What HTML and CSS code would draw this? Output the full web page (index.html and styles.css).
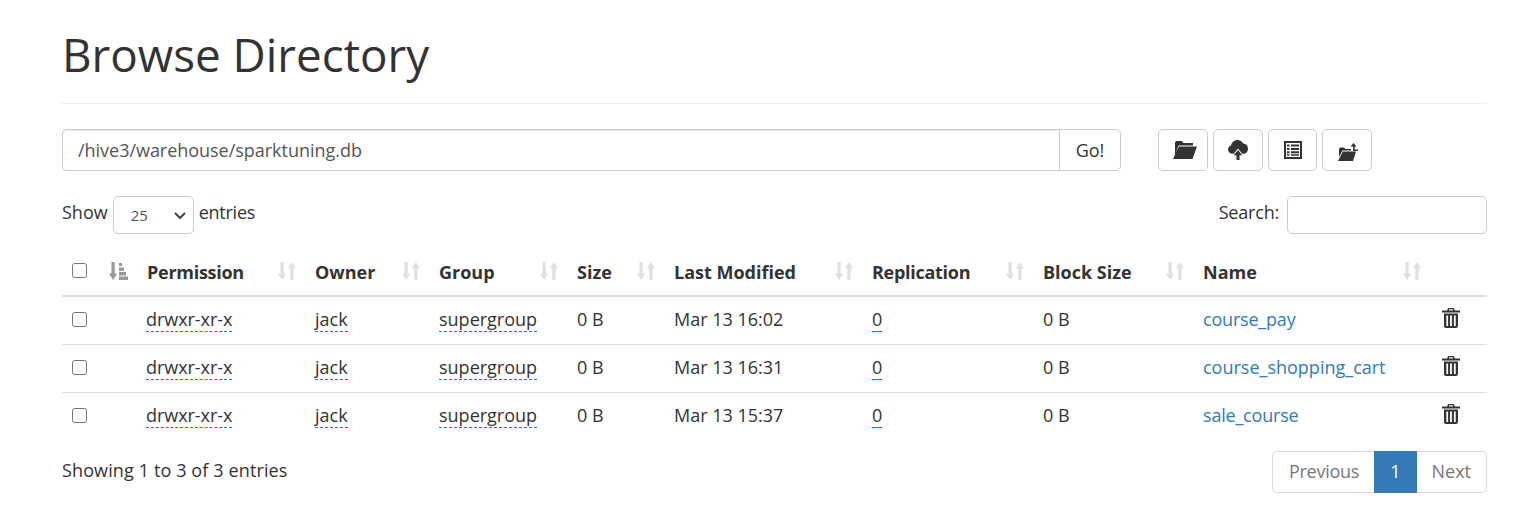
FILE: index.html
```html
<!DOCTYPE html>
<html lang="en">
<head>
<meta charset="utf-8">
<title>Browse Directory</title>
<link rel="stylesheet" href="styles.css">
</head>
<body>
<svg class="defs" width="0" height="0" aria-hidden="true">
  <symbol id="sort" viewBox="0 0 18 18">
    <path d="M2.500 0h3.200v11.500H8.200L4.100 18 0 11.500h2.500z"/>
    <path d="M12.300 18V6.500H9.800L13.900 0 18 6.500h-2.500V18z"/>
  </symbol>
  <symbol id="sortactive" viewBox="0 0 19 18">
    <path d="M2.500 0h3.200v11.500H8.200L4.100 18 0 11.500h2.500z"/>
    <path d="M10 1h3v3h-3zM10 5.500h5V9h-5zM10 10h7v3.500h-7zM10 14.500h9V18h-9z"/>
  </symbol>
  <symbol id="trash" viewBox="0 0 18 20">
    <path d="M0 2.500h5.500V1.500C5.500 .7 6.200 0 7 0h4c.8 0 1.500.7 1.500 1.500v1H18V4.500H0zM7 2.500h4V1.300H7z"/>
    <path fill-rule="evenodd" d="M2 5.500h14V18c0 1-1 2-2 2H4c-1 0-2-1-2-2zM4.300 7.500v10.500h1.800V7.500zM8.100 7.500v10.500h1.800V7.500zM11.900 7.500v10.500h1.800V7.500z"/>
  </symbol>
</svg>
<main class="page">
  <h1 class="title">Browse Directory</h1>
  <div class="toolbar">
    <div class="pathgroup">
      <input class="pathinput" type="text" value="/hive3/warehouse/sparktuning.db">
      <button class="gobtn" type="button">Go!</button>
    </div>
    <div class="tools">
      <button class="toolbtn" type="button">
        <svg class="ic-folder" width="24" height="18" viewBox="0 0 24 18"><path d="M2 14V1.500L3 0h6l1.500 2H20v2.500H5.500zM5.800 5.500H24L19.500 18H0z"/></svg>
      </button>
      <button class="toolbtn" type="button">
        <svg width="20" height="20" viewBox="0 0 21 21"><path d="M5 14.500C2.200 14.500 0 12.500 0 10c0-2 1.300-3.500 3.200-4.100C3.700 2.500 6.500 0 10 0c2.700 0 5 1.500 6 3.800 2.800.2 5 2.500 5 5.300 0 3-2.300 5.400-5.200 5.400H15L10.500 9 6 14.500z"/><path d="M10.500 10.500L15 16h-2.900v5H8.900v-5H6z"/></svg>
      </button>
      <button class="toolbtn narrow" type="button">
        <svg width="18" height="18" viewBox="0 0 18 18"><path fill-rule="evenodd" d="M0 0h18v18H0zM2 2v14h14V2zM3 3.500h2.500v2H3zM7 3.500h8v2H7zM3 7h2.500v2H3zM7 7h8v2H7zM3 10.200h2.500v2H3zM7 10.200h8v2H7zM3 13.300h2.500v1.500H3zM7 13.300h8v1.500H7z"/></svg>
      </button>
      <button class="toolbtn" type="button">
        <svg class="ic-up" width="20" height="18" viewBox="0 0 20 18"><path d="M1 14V6l1-1.500h4L7.500 6H13v1.500H4.500zM4.800 8.500H18L15 18H0z"/><path d="M15.500 0l3 3.500h-1.800v3H20v1.500h-5V3.500h-2.500z"/></svg>
      </button>
    </div>
  </div>
  <div class="controls">
    <label class="lengthlabel"><span class="ctext">Show</span><select class="lengthselect"><option>25</option></select><span class="ctext entries">entries</span></label>
    <label class="searchlabel"><span class="ctext searchtext">Search:</span><input class="searchinput" type="text"></label>
  </div>
  <table class="files">
    <thead>
      <tr>
        <th class="c-check"><input class="check" type="checkbox"></th>
        <th class="c-sort"><svg class="sorticon active" width="19" height="18"><use href="#sortactive"/></svg></th>
        <th class="c-perm"><span class="th tight">Permission<svg class="sorticon" width="18" height="18"><use href="#sort"/></svg></span></th>
        <th class="c-owner"><span class="th">Owner<svg class="sorticon" width="18" height="18"><use href="#sort"/></svg></span></th>
        <th class="c-group"><span class="th">Group<svg class="sorticon" width="18" height="18"><use href="#sort"/></svg></span></th>
        <th class="c-size"><span class="th">Size<svg class="sorticon" width="18" height="18"><use href="#sort"/></svg></span></th>
        <th class="c-mod"><span class="th">Last Modified<svg class="sorticon" width="18" height="18"><use href="#sort"/></svg></span></th>
        <th class="c-rep"><span class="th tight">Replication<svg class="sorticon" width="18" height="18"><use href="#sort"/></svg></span></th>
        <th class="c-block"><span class="th">Block Size<svg class="sorticon" width="18" height="18"><use href="#sort"/></svg></span></th>
        <th class="c-name"><span class="th">Name<svg class="sorticon" width="18" height="18"><use href="#sort"/></svg></span></th>
        <th class="c-del"></th>
      </tr>
    </thead>
    <tbody>
      <tr>
        <td><input class="check" type="checkbox"></td><td></td>
        <td><span class="editable perm">drwxr-xr-x</span></td>
        <td><span class="editable">jack</span></td>
        <td><span class="editable">supergroup</span></td>
        <td>0 B</td>
        <td>Mar 13 16:02</td>
        <td><span class="editable red">0</span></td>
        <td>0 B</td>
        <td><a class="link short" href="#">course_pay</a></td>
        <td class="del"><svg width="18" height="20"><use href="#trash"/></svg></td>
      </tr>
      <tr>
        <td><input class="check" type="checkbox"></td><td></td>
        <td><span class="editable perm">drwxr-xr-x</span></td>
        <td><span class="editable">jack</span></td>
        <td><span class="editable">supergroup</span></td>
        <td>0 B</td>
        <td>Mar 13 16:31</td>
        <td><span class="editable red">0</span></td>
        <td>0 B</td>
        <td><a class="link" href="#">course_shopping_cart</a></td>
        <td class="del"><svg width="18" height="20"><use href="#trash"/></svg></td>
      </tr>
      <tr>
        <td><input class="check" type="checkbox"></td><td></td>
        <td><span class="editable perm">drwxr-xr-x</span></td>
        <td><span class="editable">jack</span></td>
        <td><span class="editable">supergroup</span></td>
        <td>0 B</td>
        <td>Mar 13 15:37</td>
        <td><span class="editable red">0</span></td>
        <td>0 B</td>
        <td><a class="link short" href="#">sale_course</a></td>
        <td class="del"><svg width="18" height="20"><use href="#trash"/></svg></td>
      </tr>
    </tbody>
  </table>
  <div class="footer">
    <div class="info">Showing 1 to 3 of 3 entries</div>
    <nav class="pager">
      <a class="pg first" href="#">Previous</a><a class="pg current" href="#">1</a><a class="pg last" href="#">Next</a>
    </nav>
  </div>
</main>
</body>
</html>
```
FILE: styles.css
```css
* { box-sizing: border-box; }
html, body { margin: 0; background: #fff; }
body {
  font-family: "Open Sans", "Noto Sans", sans-serif;
  font-size: 18px;
  color: #333;
  height: 520px;
  overflow: hidden;
}
.defs { position: absolute; }
.page { padding: 0 40px 0 62px; }
.title {
  margin: 0;
  height: 104px;
  padding-top: 25px;
  font-size: 45.75px;
  line-height: 58px;
  font-weight: 400;
  border-bottom: 1px solid #eee;
}
.toolbar { display: flex; margin-top: 25px; height: 42px; }
.pathgroup { display: flex; width: 1059px; flex: none; }
.pathinput {
  flex: 1;
  min-width: 0;
  height: 42px;
  padding: 0 15px;
  font: inherit;
  letter-spacing: -.03px;
  color: #555;
  border: 1px solid #ccc;
  border-right: 0;
  border-radius: 5px 0 0 5px;
  box-shadow: inset 0 1px 1px rgba(0,0,0,.075);
}
.gobtn {
  width: 62px;
  flex: none;
  height: 42px;
  font: inherit;
  color: #333;
  background: #fff;
  border: 1px solid #ccc;
  border-radius: 0 5px 5px 0;
}
.tools { display: flex; gap: 5px; margin-left: 37px; }
.toolbtn {
  width: 50px;
  height: 42px;
  padding: 0;
  display: flex;
  align-items: center;
  justify-content: center;
  background: #fff;
  border: 1px solid #ccc;
  border-radius: 5px;
}
.toolbtn.narrow { width: 49px; }
.toolbtn svg { fill: #333; }
.ic-folder { margin-left: 3px; }
.ic-up { margin-top: 4px; margin-left: 1px; }
.controls {
  display: flex;
  justify-content: space-between;
  align-items: center;
  margin-top: 25px;
  height: 38px;
}
.lengthlabel, .searchlabel { display: flex; align-items: center; }
.ctext { padding-bottom: 7px; }
.lengthselect {
  appearance: none;
  width: 81px;
  height: 38px;
  margin: 0 5px 0 5px;
  padding: 0 17px;
  font: 15px "Open Sans", sans-serif;
  color: #555;
  background: #fff url("data:image/svg+xml,%3Csvg xmlns='http://www.w3.org/2000/svg' width='12' height='7' viewBox='0 0 12 7'%3E%3Cpath d='M1 1l5 5 5-5' fill='none' stroke='%23444' stroke-width='2'/%3E%3C/svg%3E") no-repeat right 7px center;
  border: 1px solid #ccc;
  border-radius: 5px;
}
.entries { letter-spacing: -.25px; }
.searchtext { letter-spacing: -.2px; }
.searchinput {
  width: 200px;
  height: 38px;
  margin-left: 8px;
  border: 1px solid #ccc;
  border-radius: 5px;
}
.files {
  width: 1425px;
  margin-top: 14px;
  table-layout: fixed;
  border-collapse: collapse;
}
.files th, .files td {
  padding: 0 10px;
  text-align: left;
  vertical-align: middle;
  overflow: visible;
  white-space: nowrap;
}
.files th { height: 48px; font-weight: 700; border-bottom: 2px solid #ddd; }
.files td { height: 48px; padding-bottom: 2px; border-bottom: 1px solid #ddd; }
.files tbody tr:last-child td { border-bottom: 0; }
.c-check { width: 37px; }
.c-sort { width: 38px; }
.c-perm { width: 168px; }
.c-owner { width: 124px; }
.c-group { width: 138px; }
.c-size { width: 97px; }
.c-mod { width: 198px; }
.c-rep { width: 171px; }
.c-block { width: 160px; }
.c-name { width: 239px; }
.th { display: flex; justify-content: space-between; align-items: center; }
.th.tight { letter-spacing: -.28px; }
.sorticon { fill: #e0e0e0; flex: none; margin: -1px -1px 0 0; }
.c-name .sorticon { margin-right: 1px; }
.sorticon.active { fill: #999; display: block; margin: -1px 0 0; }
.check { display: block; width: 15px; height: 15px; margin: -2px 0 0; }
.files td .check { margin-top: 0; }
.editable { border-bottom: 1px dashed #08c; }
.editable.perm { margin-left: -1px; letter-spacing: -.05px; }
.editable.red { border-bottom-color: #d14; }
.link { color: #337ab7; text-decoration: none; }
.link.short { letter-spacing: -.2px; }
.del svg { fill: #333; display: block; margin: -2px 0 0 0; }
.footer {
  display: flex;
  justify-content: space-between;
  align-items: flex-start;
  margin-top: 11px;
}
.info { padding-top: 7px; letter-spacing: .12px; }
.pager { display: flex; height: 42px; }
.pg {
  display: block;
  padding: 0 15px;
  line-height: 38px;
  color: #777;
  text-decoration: none;
  border: 1px solid #ddd;
  background: #fff;
}
.pg.first { padding-left: 16px; letter-spacing: -.25px; border-radius: 5px 0 0 5px; border-right: 0; }
.pg.last { border-radius: 0 5px 5px 0; border-left: 0; }
.pg.current { color: #fff; background: #337ab7; border-color: #337ab7; }
```
